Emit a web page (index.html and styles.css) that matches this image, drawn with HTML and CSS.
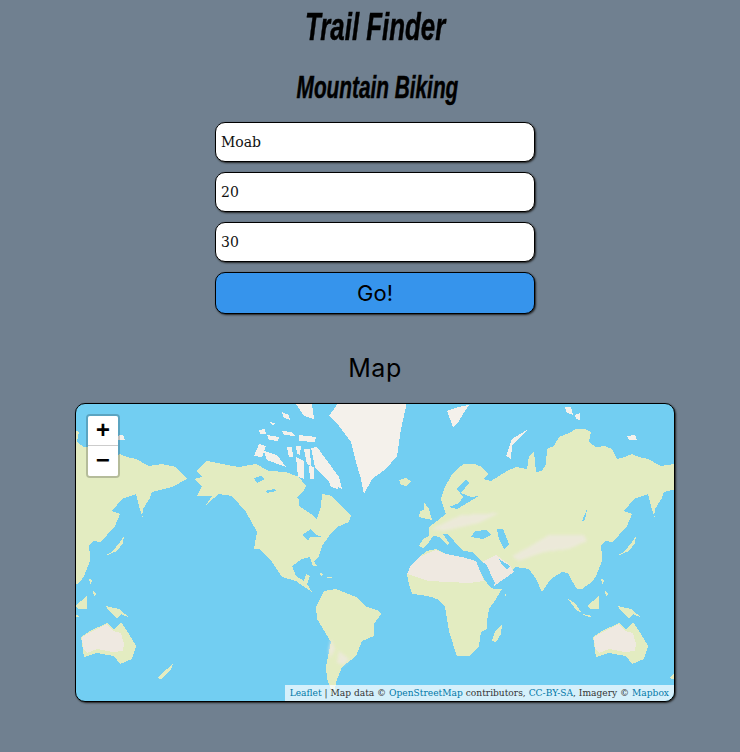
FILE: index.html
```html
<!DOCTYPE html>
<html>
	<head>
		<meta charset="UTF-8">
		<title>Trail Finder</title>
		<link rel="stylesheet" href="styles.css">
	</head>
	<body>
		<div id="page">
			<h1>Trail Finder</h1>
			<h2>Mountain Biking</h2>
			<form id="search">
				<input type="text" value="Moab">
				<input type="text" value="20">
				<input type="text" value="30">
				<button type="button">Go!</button>
			</form>
			<h3>Map</h3>
			<div id="map">
				<svg class="world" viewBox="77 405 598 297" width="598" height="297">
					<defs>
						<filter id="soft"><feGaussianBlur stdDeviation="1.6"/></filter>
						<g id="land">
							<!-- eurasia, runs past the right edge, the copy at -512 shows on the left -->
							<polygon class="green" points="420,547 424,540 430,537 430,528 438,522 447,515 442,500 446,488 452,477 458,470 465,465 476,465 483,468 489,475 484,480 492,482 500,477 508,472 517,468 528,470 530,457 535,453 537,473 543,472 547,465 548,450 555,447 560,438 570,434 577,430 586,430 592,433 590,443 597,448 606,447 613,450 618,460 626,458 633,455 640,458 649,460 662,467 675,465 689,468 697,477 700,480 685,488 665,493 654,510 656,519 652,507 649,495 635,500 625,512 633,515 628,527 620,536 613,543 606,542 602,547 603,557 603,562 597,577 593,583 587,587 583,590 578,590 572,580 569,574 563,573 552,580 547,587 543,593 537,580 530,570 517,568 513,571 515,573 495,587 483,563 480,560 473,553 464,552 458,546 452,538 448,535 444,535 450,544 448,546 441,538 434,537 430,543 424,549"/>
							<!-- africa -->
							<polygon class="green" points="408,575 412,566 420,558 428,552 437,550 447,555 463,558 477,562 480,570 485,580 491,588 495,590 503,590 497,600 490,610 488,622 488,630 482,633 480,647 470,657 458,657 454,645 450,632 448,620 446,608 440,601 433,598 422,596 413,595 410,585"/>
							<polygon class="green" points="493,642 496,632 503,625 502,635 497,643"/>
							<!-- north america -->
							<polygon class="green" points="197,472 208,462 223,465 240,468 257,465 270,472 287,473 300,478 307,487 300,500 300,507 312,515 318,520 322,508 323,495 333,497 343,508 352,517 350,523 338,528 333,533 323,547 320,557 315,562 318,567 314,567 311,558 303,560 293,567 297,577 305,582 307,575 311,577 308,585 313,593 304,587 297,582 283,578 273,563 260,550 255,550 258,533 247,513 233,497 220,495 210,503 205,509 213,497 198,497 203,487 195,480 203,478"/>
							<!-- south america -->
							<polygon class="green" points="317,608 325,592 337,590 357,598 368,608 380,612 382,615 375,625 375,637 363,642 357,657 343,668 337,683 335,698 328,680 327,667 332,643 318,620"/>
							<!-- australia and islands -->
							<polygon class="green" points="594,638 603,632 620,624 627,630 634,623 642,635 649,647 645,660 633,665 627,657 610,654 597,658"/>
							<polygon class="green" points="670,679 674,675 686,665 684,670 674,680"/>
							<polygon class="green" points="569,600 576,604 582,613 578,612"/>
							<polygon class="green" points="588,607 600,597 600,610 591,610"/>
							<polygon class="green" points="583,615 593,617 590,618"/>
							<polygon class="green" points="619,607 632,610 643,619 634,615 630,619 622,612"/>
							<polygon class="green" points="655,518 653,505 665,493 663,499 656,510"/>
							<polygon class="green" points="618,557 626,552 633,543 637,537 636,544 630,552"/>
							<polygon class="green" points="420,518 421,512 425,511 425,503 430,510 433,521 424,519"/>
							<polygon class="green" points="400,481 407,479 412,482 407,487 402,486"/>
							<polygon class="green" points="505,596 507,595 507,598"/>
							<polygon class="green" points="602,580 605,581 604,586"/>
							<polygon class="green" points="321,574 324,575 322,578"/>
							<polygon class="green" points="327,578 333,578 333,579 328,579"/>
							<polygon class="green" points="606,592 609,595 607,597"/>
							<!-- soft sand in the middle of the land -->
							<g class="blurred">
								<polygon class="sand" points="513,557 530,548 550,536 585,536 588,542 570,550 545,553 520,562"/>
								<polygon class="sand" points="432,530 462,516 500,514 480,524 445,532"/>
								<polygon class="sand" points="340,652 350,660 345,666 338,664"/>
								<polygon class="sand" points="332,640 336,650 331,660 330,650"/>
							</g>
							<!-- deserts -->
							<polygon class="sand" points="408,575 412,566 420,558 437,551 447,555 463,558 477,562 481,572 485,582 470,584 450,583 430,582"/>
							<polygon class="sand" points="483,563 497,556 510,565 515,573 495,587"/>
							<polygon class="sand" points="595,638 604,633 620,625 626,632 634,634 637,645 636,652 625,653 610,650 600,654 596,650"/>
							<!-- arctic -->
							<polygon class="snow" points="340,403 408,403 402,430 398,457 387,470 373,480 365,495 362,480 357,463 352,443 337,423 330,417"/>
							<polygon class="snow" points="255,457 260,445 267,447 263,458"/>
							<polygon class="snow" points="265,452 278,456 287,468 268,461"/>
							<polygon class="snow" points="268,436 280,438 279,442 270,441"/>
							<polygon class="snow" points="283,432 293,433 296,437 285,436"/>
							<polygon class="snow" points="300,436 317,438 316,443 300,442"/>
							<polygon class="snow" points="260,431 266,430 267,435 261,435"/>
							<polygon class="snow" points="270,423 276,424 274,427"/>
							<polygon class="snow" points="283,413 290,416 291,421 285,419"/>
							<polygon class="snow" points="297,405 313,405 315,420 305,417"/>
							<polygon class="snow" points="288,448 293,448 294,458 290,458"/>
							<polygon class="snow" points="297,447 302,447 301,456 298,455"/>
							<polygon class="snow" points="305,450 311,450 312,467 308,465"/>
							<polygon class="snow" points="312,449 318,448 340,478 343,490 330,483 316,468"/>
							<polygon class="snow" points="297,458 305,462 305,480 299,478"/>
							<polygon class="snow" points="310,467 315,468 315,480 311,480"/>
							<polygon class="snow" points="328,477 340,483 339,490 332,488"/>
							<polygon class="snow" points="448,412 459,408 470,406 466,412 460,422 454,428"/>
							<polygon class="snow" points="528,431 513,440 507,457 512,460 513,447"/>
							<polygon class="snow" points="566,408 572,408 574,416 568,414"/>
							<polygon class="snow" points="576,416 581,414 581,421 577,420"/>
							<polygon class="snow" points="628,437 636,436 638,441 630,441"/>
							<!-- seas and lakes -->
							<polygon class="sea" points="298,498 304,492 314,494 322,498 322,508 318,518 312,515 304,507"/>
							<polygon class="sea" points="255,479 262,477 266,480 258,484"/>
							<polygon class="sea" points="266,492 275,490 277,492 268,494"/>
							<polygon class="sea" points="303,536 312,530 316,535 323,538 311,538 309,542"/>
							<polygon class="sea" points="450,508 460,504 464,498 458,490 467,480 470,484 462,494 472,498 480,497 470,503 458,510"/>
							<polygon class="sea" points="472,538 476,532 487,531 492,536 484,540"/>
							<polygon class="sea" points="498,530 504,530 510,545 505,550 500,540"/>
							<polygon class="sea" points="583,522 588,510 586,521"/>
							<polygon class="sea" points="483,563 487,565 496,584 494,586"/>
							<polygon class="sea" points="500,560 511,567 508,570 503,566"/>
						</g>
						<clipPath id="tiles"><rect x="77" y="405" width="598" height="297"/></clipPath>
					</defs>
					<g clip-path="url(#tiles)">
						<use href="#land"/>
						<use href="#land" x="-512"/>
					</g>
				</svg>
				<div class="zoom">
					<a>+</a>
					<a>&#8722;</a>
				</div>
				<div class="attribution"><a>Leaflet</a> | Map data © <a>OpenStreetMap</a> contributors, <a>CC-BY-SA</a>, Imagery © <a>Mapbox</a></div>
			</div>
		</div>
	</body>
</html>
```

FILE: styles.css
```css
*{
	margin: 0;
	padding: 0;
	box-sizing: border-box;
}
body{
	background: #708090;
	color: #000;
	padding-left: 10px;
}
#page{
	display: flex;
	flex-direction: column;
	align-items: center;
	height: 752px;
	overflow: hidden;
}
h1, h2{
	font-family: "Liberation Sans", sans-serif;
	font-style: italic;
	font-weight: bold;
	-webkit-text-stroke: 0.5px #000;
}
h1{
	font-size: 38px;
	line-height: 40px;
	margin-top: 7px;
	transform: scaleX(0.68);
}
h2{
	font-size: 32px;
	line-height: 36px;
	margin-top: 22px;
	transform: translateX(2px) scaleX(0.65);
}
#search{
	display: flex;
	flex-direction: column;
	gap: 10px;
	width: 320px;
	margin-top: 17px;
}
#search input{
	height: 40px;
	padding: 0 5px;
	background: #fff;
	border: 1px solid #000;
	border-radius: 10px;
	box-shadow: 1px 1px 2px #222;
	font-family: "DejaVu Serif", serif;
	font-size: 14px;
	color: #111;
}
#search button{
	height: 42px;
	background: #3694ec;
	border: 1px solid #000;
	border-radius: 10px;
	box-shadow: 1px 1px 2px #222;
	font-family: Inter, sans-serif;
	font-size: 22px;
	color: #000;
}
h3{
	font-family: Inter, sans-serif;
	font-weight: normal;
	font-size: 25px;
	letter-spacing: 0.5px;
	line-height: 32px;
	margin-top: 38px;
}
#map{
	position: relative;
	width: 600px;
	height: 299px;
	margin-top: 19px;
	background: #72cef2;
	border: 1px solid #000;
	border-radius: 10px;
	box-shadow: 1px 1px 2px #222;
	overflow: hidden;
}
.world{
	display: block;
	shape-rendering: crispEdges;
}
.green{
	fill: #e3ecc1;
}
.sand{
	fill: #efe9e1;
}
.blurred{
	filter: url(#soft);
	opacity: 0.75;
}
.snow{
	fill: #f4f1eb;
}
.sea{
	fill: #72cef2;
}
.zoom{
	position: absolute;
	left: 10px;
	top: 10px;
	display: flex;
	flex-direction: column;
	border: 2px solid rgba(0,0,0,0.2);
	border-radius: 4px;
}
.zoom a{
	display: block;
	width: 30px;
	height: 30px;
	background: #fff;
	font-family: "Liberation Mono", monospace;
	font-weight: bold;
	font-size: 24px;
	line-height: 31px;
	text-align: center;
	color: #000;
}
.zoom a:first-child{
	border-bottom: 1px solid #ccc;
	border-radius: 2px 2px 0 0;
}
.zoom a:last-child{
	border-radius: 0 0 2px 2px;
}
.attribution{
	position: absolute;
	right: 0;
	bottom: 0;
	height: 16px;
	padding: 0 5px;
	background: rgba(255,255,255,0.7);
	font-family: "DejaVu Serif", serif;
	font-size: 9.1px;
	line-height: 16px;
	color: #333;
	white-space: nowrap;
}
.attribution a{
	color: #0078a8;
}
```
